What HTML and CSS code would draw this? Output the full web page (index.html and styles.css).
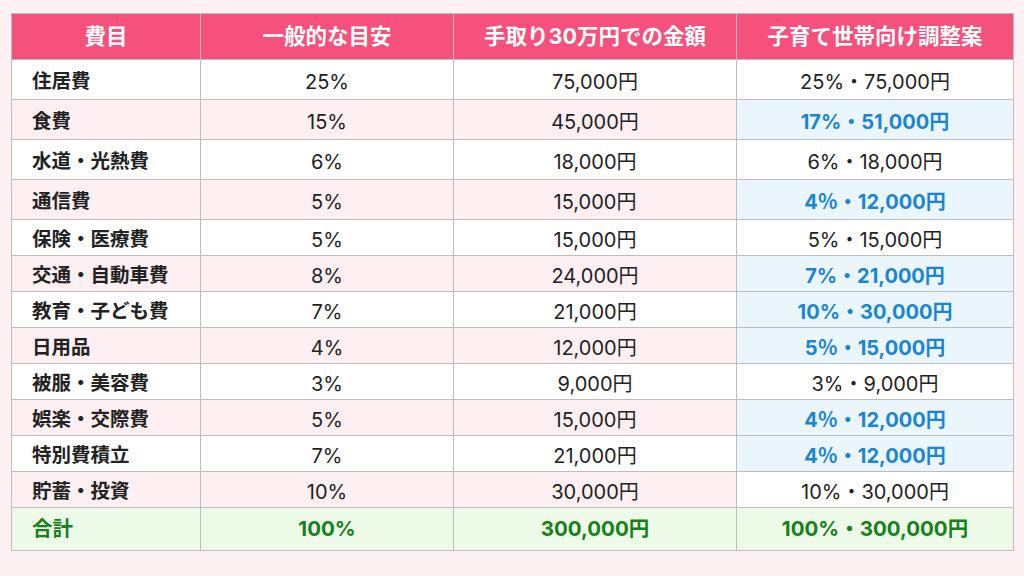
FILE: index.html
```html
<!DOCTYPE html>
<html lang="ja">
<head>
<meta charset="utf-8">
<link rel="stylesheet" href="styles.css">
</head>
<body>
<table class="budget">
  <colgroup>
    <col class="c1"><col class="c2"><col class="c3"><col class="c4">
  </colgroup>
  <thead>
    <tr><th>費目</th><th>一般的な目安</th><th>手取り30万円での金額</th><th>子育て世帯向け調整案</th></tr>
  </thead>
  <tbody>
    <tr class="tall"><td class="name">住居費</td><td>25%</td><td>75,000円</td><td>25%・75,000円</td></tr>
    <tr class="tall alt"><td class="name">食費</td><td>15%</td><td>45,000円</td><td class="adj">17%・51,000円</td></tr>
    <tr class="tall"><td class="name">水道・光熱費</td><td>6%</td><td>18,000円</td><td>6%・18,000円</td></tr>
    <tr class="tall alt"><td class="name">通信費</td><td>5%</td><td>15,000円</td><td class="adj">4％・12,000円</td></tr>
    <tr><td class="name">保険・医療費</td><td>5%</td><td>15,000円</td><td>5%・15,000円</td></tr>
    <tr class="alt"><td class="name">交通・自動車費</td><td>8%</td><td>24,000円</td><td class="adj">7%・21,000円</td></tr>
    <tr><td class="name">教育・子ども費</td><td>7%</td><td>21,000円</td><td class="adj">10%・30,000円</td></tr>
    <tr class="alt"><td class="name">日用品</td><td>4%</td><td>12,000円</td><td class="adj">5％・15,000円</td></tr>
    <tr><td class="name">被服・美容費</td><td>3%</td><td>9,000円</td><td>3%・9,000円</td></tr>
    <tr class="alt"><td class="name">娯楽・交際費</td><td>5%</td><td>15,000円</td><td class="adj">4％・12,000円</td></tr>
    <tr><td class="name">特別費積立</td><td>7%</td><td>21,000円</td><td class="adj">4％・12,000円</td></tr>
    <tr class="alt"><td class="name">貯蓄・投資</td><td>10%</td><td>30,000円</td><td>10%・30,000円</td></tr>
    <tr class="total"><td class="name">合計</td><td>100%</td><td>300,000円</td><td>100%・300,000円</td></tr>
  </tbody>
</table>
</body>
</html>
```
FILE: styles.css
```css
html, body {
  margin: 0;
  padding: 0;
  background: #fdf1f4;
  width: 1024px;
  height: 576px;
  overflow: hidden;
}
body {
  font-family: Inter, "Noto Sans CJK JP", sans-serif;
  color: #222;
}
.budget {
  margin: 13px 0 0 11px;
  width: 1002px;
  border-collapse: collapse;
  table-layout: fixed;
  font-size: 20px;
}
.c1 { width: 189px; }
.c2 { width: 253px; }
.c3 { width: 283px; }
.c4 { width: 277px; }
.budget th, .budget td {
  border: 1px solid #bdbdbd;
  padding: 0;
  text-align: center;
  line-height: 1;
}
.budget th {
  background: #f6517c;
  color: #fff;
  font-weight: 700;
  font-size: 21.5px;
  height: 45px;
}
.budget td {
  height: 31px;
  padding-top: 4px;
  background: #fff;
}
.budget tr.tall td { height: 35px; }
.budget tr.alt td { background: #fdeff2; }
.budget tr.alt td:last-child { background: #fff; }
.budget td.name {
  text-align: left;
  padding-left: 20px;
  font-weight: 700;
  font-size: 19.5px;
}
.budget tr td.adj,
.budget tr.alt td.adj {
  background: #eaf5fc;
  color: #1a86d2;
  font-weight: 700;
}
.budget tr.total td {
  background: #edfae8;
  color: #17801a;
  font-weight: 700;
  font-size: 20.5px;
  height: 41px;
  padding-top: 1px;
}
```
